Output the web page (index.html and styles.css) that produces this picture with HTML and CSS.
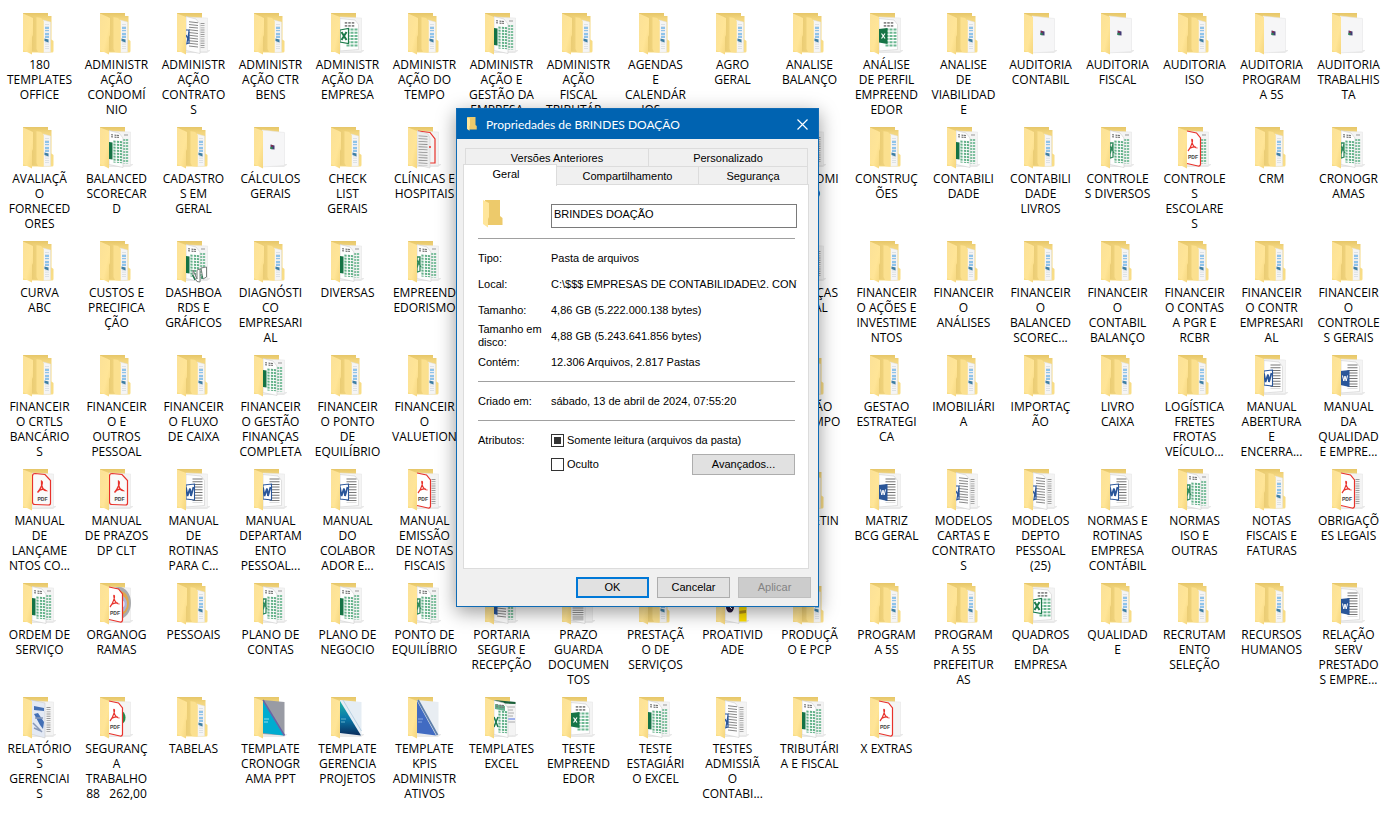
FILE: index.html
```html
<!DOCTYPE html>
<html lang="pt-BR">
<head>
<meta charset="utf-8">
<title>Propriedades de BRINDES DOAÇÃO</title>
<link rel="stylesheet" href="styles.css">
</head>
<body>
<svg class="defs" aria-hidden="true">
<defs>
<linearGradient id="gBack" x1="0" y1="0" x2="0" y2="1"><stop offset="0" stop-color="#e6c668"/><stop offset=".15" stop-color="#f3d67f"/><stop offset="1" stop-color="#f9de88"/></linearGradient>
<linearGradient id="gCover" x1="0" y1="0" x2="1" y2="1"><stop offset="0" stop-color="#fbe197"/><stop offset=".6" stop-color="#ffe597"/><stop offset="1" stop-color="#f5d67d"/></linearGradient>
<linearGradient id="gMid" x1="0" y1="0" x2="1" y2="0"><stop offset="0" stop-color="#e9cb73"/><stop offset=".5" stop-color="#f0d37c"/><stop offset="1" stop-color="#fce08d"/></linearGradient>
<linearGradient id="gTeal" x1="0" y1="0" x2="0" y2="1"><stop offset="0" stop-color="#22b1a5"/><stop offset=".5" stop-color="#0879aa"/><stop offset="1" stop-color="#0b2c5c"/></linearGradient>
<g id="back"><path d="M0 0H25V39H0Z" fill="url(#gBack)"/><path d="M9 37H34L30 40H9Z" fill="#e9e9e9"/></g>
<path id="cover" d="M0 0.5L9 4V41.5L0 37Z" fill="url(#gCover)"/>
<path id="far" d="M9 4L30.5 5V38.5L9 39Z" fill="#f4f4f4" stroke="#e2e2e2" stroke-width=".5"/>
<path id="near" d="M9 3.5L19 6L23 11V40.5L9 37.5Z" fill="#fdfdfd" stroke="#cfcfcf" stroke-width=".6"/>
<path id="wide" d="M9 5.5L24 7L27.500 11.500V36.500L9 38Z" fill="#fefefe" stroke="#cfcfcf" stroke-width=".6"/>
<g id="farXl"><use href="#far"/><path d="M24 12V36.500M27 12V36.500" stroke="#7fc09f" stroke-width="2.300" stroke-dasharray="2 1"/><path d="M24 8H28" stroke="#999" stroke-width="1"/></g>
<g id="farDoc"><use href="#far"/><path d="M25.500 10V36" stroke="#999" stroke-width="4" stroke-dasharray=".9 1.300"/></g>
<g id="nearCells" fill="none" transform="skewY(6)"><path d="M12 6V10M15.500 6V10M18 6V9" stroke="#777" stroke-width="2" stroke-dasharray="1.200 .8"/><path d="M14.500 12V34M18 12V34M21 12V34" stroke="#62b088" stroke-width="2.200" stroke-dasharray="2 1"/></g>
<g id="wideLines" fill="none"><path d="M20.500 9.500V34" stroke="#777" stroke-width="10" stroke-dasharray="1 1.700"/></g>
<g id="wideCells" fill="none"><path d="M15 9V14M18.500 9V14M22 9V14" stroke="#888" stroke-width="2.500" stroke-dasharray="1.800 1.200"/><path d="M17 15.500V34M21 15.500V34M25 15.500V34" stroke="#6cb892" stroke-width="3" stroke-dasharray="2 1.200"/></g>
<g id="acro" fill="none"><path d="M9 4L18.500 6L22.500 11V37.500Q22 39.500 20 39L9 36.500" fill="#fff" stroke="#e8322b" stroke-width="1.200"/><path d="M13.500 12.500C16 11 13.500 20 10 24M13.700 12.500C14 17 16 21 19.500 21M11.500 21.500C13.500 20 16 19.500 18 20" stroke="#e8322b" stroke-width="1.200"/><text class="glyph glyph-small" x="10" y="31.500" fill="#444">PDF</text></g>
</defs>
<symbol id="f" viewBox="0 0 33 44">
<path d="M0 0H25V3H28.500V26.500L30.500 28V38Q30.500 39.500 29 39.500H8V39H0Z" fill="url(#gBack)"/>
<path d="M20 7L27.500 9V39L20 39.500Z" fill="#f5f5f5" stroke="#e0e0e0" stroke-width=".5"/>
<path d="M24 11V37" stroke="#d3dae0" stroke-width="4" stroke-dasharray=".8 1.400"/>
<path d="M24 14V18M24 20V25" stroke="#8fc3ea" stroke-width="4" stroke-dasharray="2 1"/>
<path d="M21.500 25.500L25.500 26.500V29.500L21.500 28Z" fill="#3f7fa4"/>
<path d="M8 3L18 5L20.500 8V39.500L8 38.500Z" fill="url(#gMid)"/>
<path d="M13.500 4.200L18 5L20.500 8V39.500L15 39L13.500 36Z" fill="#fbe08f"/>
<path d="M0 .5L10 5V22L9 24V41.500L0 37Z" fill="url(#gCover)"/>
</symbol>
<symbol id="b" viewBox="0 0 33 44"><use href="#back"/><path d="M8 3L30.500 5.500V38.500L8 40Z" fill="#f6f6f7" stroke="#e2e2e2" stroke-width=".5"/><path d="M16.500 17.500L20.500 18.500V22.500L16.500 22Z" fill="#433a75"/><path d="M16.500 20H18.500V22.200L16.500 22Z" fill="#2c8a52"/><path d="M17 17.700L19 18.200V19.500H17Z" fill="#8a3048"/><use href="#cover"/></symbol>
<symbol id="xx" viewBox="0 0 33 44"><use href="#back"/><use href="#farXl"/><use href="#near"/><use href="#nearCells"/><path d="M9 15L12.500 15.500V32.500L9 32Z" fill="#147345"/><use href="#cover"/></symbol>
<symbol id="xo" viewBox="0 0 33 44"><use href="#back"/><use href="#farXl"/><use href="#near"/><use href="#nearCells"/><path d="M9 16H12V30L9 31ZM9 19L13 26M12 17L9 27" fill="none" stroke="#2f8a5c" stroke-width="1.300"/><use href="#cover"/></symbol>
<symbol id="xd" viewBox="0 0 33 44"><use href="#back"/><use href="#farXl"/><use href="#near"/><use href="#nearCells"/><path d="M9 15L12.500 15.500V32.500L9 32Z" fill="#147345"/><path d="M16 29L20 38V29L23 28V41L20 40.500L16 34ZM24 27L29.500 26V36L26 38Z" fill="#fff" stroke="#69736e" stroke-width=".9"/><path d="M15.500 34L18 39M25 35V38" stroke="#19774a" stroke-width="1.300"/><use href="#cover"/></symbol>
<symbol id="x1" viewBox="0 0 33 44"><use href="#back"/><use href="#far"/><use href="#wide"/><use href="#wideCells"/><path d="M9 17L17.500 15.500V30.500L9 29Z" fill="#fff" stroke="#1b7a4a" stroke-width="1.200"/><path d="M10.500 19L15.500 27M15.500 19L10.500 27" stroke="#1b7a4a" stroke-width="2"/><use href="#cover"/></symbol>
<symbol id="x2" viewBox="0 0 33 44"><use href="#back"/><use href="#far"/><use href="#wide"/><use href="#wideCells"/><path d="M9 16L17.500 15V31L9 29.500Z" fill="#167446"/><path d="M11.500 20.500L15 25.500M15 20.500L11.500 25.500" stroke="#fff" stroke-width="1.200"/><use href="#cover"/></symbol>
<symbol id="w1" viewBox="0 0 33 44"><use href="#back"/><use href="#far"/><use href="#wide"/><use href="#wideLines"/><path d="M9 16L17.500 15V31L9 30Z" fill="#fff" stroke="#2a5699" stroke-width="1.100"/><path d="M9 18.500L10.500 27L13 19.500L14 27L16.500 18" fill="none" stroke="#2a5699" stroke-width="1.800"/><use href="#cover"/></symbol>
<symbol id="w2" viewBox="0 0 33 44"><use href="#back"/><use href="#far"/><use href="#wide"/><use href="#wideLines"/><path d="M8.500 16L17.500 15V32L8.500 30Z" fill="#2a5699"/><path d="M10.500 20.500L11.800 26L13 21L14.200 26L15.500 20.500" fill="none" stroke="#fff" stroke-width="1"/><use href="#cover"/></symbol>
<symbol id="ww" viewBox="0 0 33 44"><use href="#back"/><use href="#farDoc"/><use href="#near"/><path d="M16.500 7V34" stroke="#888" stroke-width="9" stroke-dasharray="1 1.700" transform="skewY(6)"/><path d="M9 17H12V30L9 31M9 22L12 28M12 18L10 30" fill="none" stroke="#2a5699" stroke-width="1.200"/><use href="#cover"/></symbol>
<symbol id="wx" viewBox="0 0 33 44"><use href="#back"/><use href="#farXl"/><use href="#near"/><path d="M16.500 7V34" stroke="#888" stroke-width="9" stroke-dasharray="1 1.700" transform="skewY(6)"/><path d="M9 17L12.500 18V32L9 31Z" fill="#2a5699"/><use href="#cover"/></symbol>
<symbol id="pdf" viewBox="0 0 33 44"><use href="#back"/><use href="#far"/><path d="M12 4.500L22 5.500L27.500 11.500V34Q27.500 36 25.500 36L12 35.500Q9.500 35.500 9.500 33V7Q9.500 4.500 12 4.500Z" fill="#fafafa" stroke="#e8322b" stroke-width="1.200"/><path d="M18.500 12C21 13 17.500 20 14.500 23.500C17 20 20 19.500 23 21.500C20 21.500 18 17 18.500 12Z" fill="none" stroke="#e8322b" stroke-width="1.300"/><text class="glyph glyph-small" x="14.500" y="31.500" fill="#444">PDF</text><use href="#cover"/></symbol>
<symbol id="pn" viewBox="0 0 33 44"><use href="#back"/><use href="#far"/><use href="#acro"/><use href="#cover"/></symbol>
<symbol id="pw" viewBox="0 0 33 44"><use href="#back"/><use href="#farDoc"/><use href="#acro"/><use href="#cover"/></symbol>
<symbol id="px" viewBox="0 0 33 44"><use href="#back"/><use href="#farXl"/><use href="#acro"/><use href="#cover"/></symbol>
<symbol id="pg" viewBox="0 0 33 44"><use href="#back"/><use href="#far"/><path d="M22 14Q25.500 16 25.500 20.500T22 27Z" fill="#25884b"/><use href="#acro"/><use href="#cover"/></symbol>
<symbol id="pd" viewBox="0 0 33 44"><use href="#back"/><use href="#far"/><ellipse cx="19" cy="20" rx="12" ry="16" fill="#a9abad"/><ellipse cx="20" cy="20" rx="9" ry="12" fill="#dfa84e"/><ellipse cx="20" cy="21" rx="7" ry="9" fill="#aeb2d5"/><ellipse cx="23" cy="21" rx="1.500" ry="3" fill="#eef"/><use href="#acro"/><use href="#cover"/></symbol>
<symbol id="cl" viewBox="0 0 33 44"><use href="#back"/><use href="#far"/><path d="M10 4L22 5.500L27 12V36H22" fill="none" stroke="#e8322b" stroke-width="1.200"/><path d="M9 4L20 7L22 11V41L9 38Z" fill="#ededed" stroke="#ccc" stroke-width=".5"/><path d="M15 8V38" stroke="#8b8b8b" stroke-width="9" stroke-dasharray=".8 1.900" transform="skewY(3)"/><circle cx="22" cy="20" r="1" fill="#e8322b"/><use href="#cover"/></symbol>
<symbol id="gd" viewBox="0 0 33 44"><use href="#back"/><use href="#far"/><use href="#near"/><path d="M16 7V38" stroke="#8d8d8d" stroke-width="11" stroke-dasharray="1 1.200"/><path d="M10 23H22" stroke="#d94949" stroke-width="1.500"/><use href="#cover"/></symbol>
<symbol id="pr" viewBox="0 0 33 44"><use href="#back"/><use href="#far"/><path d="M21 8H30.500V38.500H21Z" fill="#ffe000"/><path d="M22 28L30 27V30L22 31Z" fill="#b59112"/><use href="#near"/><ellipse cx="14" cy="24" rx="4" ry="5.500" fill="#271a3d"/><path d="M13 23L16 26" stroke="#fff" stroke-width="1"/><use href="#cover"/></symbol>
<symbol id="rg" viewBox="0 0 33 44"><use href="#back"/><use href="#farDoc"/><path d="M8 3L22 6V41L8 37Z" fill="#e3e9f4" stroke="#c4c4c4" stroke-width=".5"/><path d="M11 9L21 11V14L11 13ZM11 17L15 16L21 25L20 32L17 28Z" fill="#4470b5"/><path d="M10 26L19 35M12 21H20M11 31L18 34" stroke="#8798b9" stroke-width="1.500"/><use href="#cover"/></symbol>
<symbol id="t1" viewBox="0 0 33 44"><use href="#back"/><path d="M9 3L30.500 5V38.500L9 37Z" fill="#999ba4"/><path d="M9 4L30 38.500L9 36Z" fill="#00acd0"/><path d="M9 3L30.500 38.500" stroke="#6964a5" stroke-width="1.500"/><path d="M10 22H15M10 25H14" stroke="#b4e8f2" stroke-width=".8"/><use href="#cover"/></symbol>
<symbol id="t2" viewBox="0 0 33 44"><use href="#back"/><path d="M9 3L30.500 5V38.500L9 37Z" fill="#e5edf4"/><path d="M9 4L30 38.500L9 36Z" fill="url(#gTeal)"/><path d="M12 3L30.500 34" stroke="#b9d1e3" stroke-width="1"/><path d="M10 22H15M10 25H14" stroke="#7cc3d8" stroke-width=".8"/><use href="#cover"/></symbol>
<symbol id="t3" viewBox="0 0 33 44"><use href="#back"/><path d="M9 3L30.500 5V38.500L9 37Z" fill="#e8edf2"/><path d="M9 4L28 38.500L9 36Z" fill="#416bc2"/><path d="M10 3L29.500 38" stroke="#5e7faa" stroke-width="1.800"/><path d="M10 22H15M10 25H14" stroke="#9db7ea" stroke-width=".8"/><use href="#cover"/></symbol>
<symbol id="te" viewBox="0 0 33 44"><use href="#back"/><use href="#far"/><path d="M9 3L30.500 5V7L9 6Z" fill="#1a5f38"/><path d="M22 10H30M22 13H28M22 16H29M22 19H28M22 25H30" stroke="#999" stroke-width=".8"/><path d="M22 22H30" stroke="#4c6ee6" stroke-width="1"/><use href="#near"/><path d="M10 7L20 9V14L10 12Z" fill="#63b08b"/><use href="#nearCells"/><path d="M9 20L13 30M13 20L9 30" stroke="#19774a" stroke-width="1.500"/><use href="#cover"/></symbol>
<symbol id="closed" viewBox="0 0 20 28"><path d="M2 0H17V16L19.500 18V25H2Z" fill="#edca6b"/><path d="M0 0L6 3V17L5 19V27.500L0 24Z" fill="#ffe69b"/></symbol>
</svg>

<ul class="desktop">
<li class="item"><svg class="pic"><use href="#f"/></svg><span>180<br>TEMPLATES<br>OFFICE</span></li>
<li class="item"><svg class="pic"><use href="#f"/></svg><span>ADMINISTR<br>AÇÃO<br>CONDOMÍ<br>NIO</span></li>
<li class="item"><svg class="pic"><use href="#ww"/></svg><span>ADMINISTR<br>AÇÃO<br>CONTRATO<br>S</span></li>
<li class="item"><svg class="pic"><use href="#f"/></svg><span>ADMINISTR<br>AÇÃO CTR<br>BENS</span></li>
<li class="item"><svg class="pic"><use href="#x1"/></svg><span>ADMINISTR<br>AÇÃO DA<br>EMPRESA</span></li>
<li class="item"><svg class="pic"><use href="#f"/></svg><span>ADMINISTR<br>AÇÃO DO<br>TEMPO</span></li>
<li class="item"><svg class="pic"><use href="#xx"/></svg><span>ADMINISTR<br>AÇÃO E<br>GESTÃO DA<br>EMPRESA...</span></li>
<li class="item"><svg class="pic"><use href="#f"/></svg><span>ADMINISTR<br>AÇÃO<br>FISCAL<br>TRIBUTÁR...</span></li>
<li class="item"><svg class="pic"><use href="#f"/></svg><span>AGENDAS<br>E<br>CALENDÁR<br>IOS...</span></li>
<li class="item"><svg class="pic"><use href="#f"/></svg><span>AGRO<br>GERAL</span></li>
<li class="item"><svg class="pic"><use href="#f"/></svg><span>ANALISE<br>BALANÇO</span></li>
<li class="item"><svg class="pic"><use href="#x2"/></svg><span>ANÁLISE<br>DE PERFIL<br>EMPREEND<br>EDOR</span></li>
<li class="item"><svg class="pic"><use href="#f"/></svg><span>ANALISE<br>DE<br>VIABILIDAD<br>E</span></li>
<li class="item"><svg class="pic"><use href="#b"/></svg><span>AUDITORIA<br>CONTABIL</span></li>
<li class="item"><svg class="pic"><use href="#b"/></svg><span>AUDITORIA<br>FISCAL</span></li>
<li class="item"><svg class="pic"><use href="#f"/></svg><span>AUDITORIA<br>ISO</span></li>
<li class="item"><svg class="pic"><use href="#b"/></svg><span>AUDITORIA<br>PROGRAM<br>A 5S</span></li>
<li class="item"><svg class="pic"><use href="#b"/></svg><span>AUDITORIA<br>TRABALHIS<br>TA</span></li>

<li class="item"><svg class="pic"><use href="#f"/></svg><span>AVALIAÇÃ<br>O<br>FORNECED<br>ORES</span></li>
<li class="item"><svg class="pic"><use href="#xx"/></svg><span>BALANCED<br>SCORECAR<br>D</span></li>
<li class="item"><svg class="pic"><use href="#f"/></svg><span>CADASTRO<br>S EM<br>GERAL</span></li>
<li class="item"><svg class="pic"><use href="#b"/></svg><span>CÁLCULOS<br>GERAIS</span></li>
<li class="item"><svg class="pic"><use href="#f"/></svg><span>CHECK<br>LIST<br>GERAIS</span></li>
<li class="item"><svg class="pic"><use href="#cl"/></svg><span>CLÍNICAS E<br>HOSPITAIS</span></li>
<li class="gap"></li>
<li class="item"><svg class="pic"><use href="#ww"/></svg><span>CONDOMI<br>NIO</span></li>
<li class="item"><svg class="pic"><use href="#f"/></svg><span>CONSTRUÇ<br>ÕES</span></li>
<li class="item"><svg class="pic"><use href="#xx"/></svg><span>CONTABILI<br>DADE</span></li>
<li class="item"><svg class="pic"><use href="#f"/></svg><span>CONTABILI<br>DADE<br>LIVROS</span></li>
<li class="item"><svg class="pic"><use href="#xo"/></svg><span>CONTROLE<br>S DIVERSOS</span></li>
<li class="item"><svg class="pic"><use href="#px"/></svg><span>CONTROLE<br>S<br>ESCOLARE<br>S</span></li>
<li class="item"><svg class="pic"><use href="#f"/></svg><span>CRM</span></li>
<li class="item"><svg class="pic"><use href="#xo"/></svg><span>CRONOGR<br>AMAS</span></li>

<li class="item"><svg class="pic"><use href="#f"/></svg><span>CURVA<br>ABC</span></li>
<li class="item"><svg class="pic"><use href="#f"/></svg><span>CUSTOS E<br>PRECIFICA<br>ÇÃO</span></li>
<li class="item"><svg class="pic"><use href="#xd"/></svg><span>DASHBOA<br>RDS E<br>GRÁFICOS</span></li>
<li class="item"><svg class="pic"><use href="#f"/></svg><span>DIAGNÓSTI<br>CO<br>EMPRESARI<br>AL</span></li>
<li class="item"><svg class="pic"><use href="#xx"/></svg><span>DIVERSAS</span></li>
<li class="item"><svg class="pic"><use href="#xo"/></svg><span>EMPREEND<br>EDORISMO</span></li>
<li class="gap"></li>
<li class="item"><svg class="pic"><use href="#ww"/></svg><span>FINANÇAS<br>GERAL</span></li>
<li class="item"><svg class="pic"><use href="#f"/></svg><span>FINANCEIR<br>O AÇÕES E<br>INVESTIME<br>NTOS</span></li>
<li class="item"><svg class="pic"><use href="#f"/></svg><span>FINANCEIR<br>O<br>ANÁLISES</span></li>
<li class="item"><svg class="pic"><use href="#f"/></svg><span>FINANCEIR<br>O<br>BALANCED<br>SCOREC...</span></li>
<li class="item"><svg class="pic"><use href="#f"/></svg><span>FINANCEIR<br>O<br>CONTABIL<br>BALANÇO</span></li>
<li class="item"><svg class="pic"><use href="#f"/></svg><span>FINANCEIR<br>O CONTAS<br>A PGR E<br>RCBR</span></li>
<li class="item"><svg class="pic"><use href="#f"/></svg><span>FINANCEIR<br>O CONTR<br>EMPRESARI<br>AL</span></li>
<li class="item"><svg class="pic"><use href="#f"/></svg><span>FINANCEIR<br>O<br>CONTROLE<br>S GERAIS</span></li>

<li class="item"><svg class="pic"><use href="#f"/></svg><span>FINANCEIR<br>O CRTLS<br>BANCÁRIO<br>S</span></li>
<li class="item"><svg class="pic"><use href="#f"/></svg><span>FINANCEIR<br>O E<br>OUTROS<br>PESSOAL</span></li>
<li class="item"><svg class="pic"><use href="#f"/></svg><span>FINANCEIR<br>O FLUXO<br>DE CAIXA</span></li>
<li class="item"><svg class="pic"><use href="#xx"/></svg><span>FINANCEIR<br>O GESTÃO<br>FINANÇAS<br>COMPLETA</span></li>
<li class="item"><svg class="pic"><use href="#f"/></svg><span>FINANCEIR<br>O PONTO<br>DE<br>EQUILÍBRIO</span></li>
<li class="item"><svg class="pic"><use href="#f"/></svg><span>FINANCEIR<br>O<br>VALUETION</span></li>
<li class="gap"></li>
<li class="item"><svg class="pic"><use href="#f"/></svg><span>GESTÃO<br>DO TEMPO</span></li>
<li class="item"><svg class="pic"><use href="#f"/></svg><span>GESTAO<br>ESTRATEGI<br>CA</span></li>
<li class="item"><svg class="pic"><use href="#f"/></svg><span>IMOBILIÁRI<br>A</span></li>
<li class="item"><svg class="pic"><use href="#f"/></svg><span>IMPORTAÇ<br>ÃO</span></li>
<li class="item"><svg class="pic"><use href="#f"/></svg><span>LIVRO<br>CAIXA</span></li>
<li class="item"><svg class="pic"><use href="#f"/></svg><span>LOGÍSTICA<br>FRETES<br>FROTAS<br>VEÍCULO...</span></li>
<li class="item"><svg class="pic"><use href="#w1"/></svg><span>MANUAL<br>ABERTURA<br>E<br>ENCERRA...</span></li>
<li class="item"><svg class="pic"><use href="#w2"/></svg><span>MANUAL<br>DA<br>QUALIDAD<br>E EMPRE...</span></li>

<li class="item"><svg class="pic"><use href="#pdf"/></svg><span>MANUAL<br>DE<br>LANÇAME<br>NTOS CO...</span></li>
<li class="item"><svg class="pic"><use href="#pdf"/></svg><span>MANUAL<br>DE PRAZOS<br>DP CLT</span></li>
<li class="item"><svg class="pic"><use href="#w1"/></svg><span>MANUAL<br>DE<br>ROTINAS<br>PARA C...</span></li>
<li class="item"><svg class="pic"><use href="#w1"/></svg><span>MANUAL<br>DEPARTAM<br>ENTO<br>PESSOAL...</span></li>
<li class="item"><svg class="pic"><use href="#w1"/></svg><span>MANUAL<br>DO<br>COLABOR<br>ADOR E...</span></li>
<li class="item"><svg class="pic"><use href="#pw"/></svg><span>MANUAL<br>EMISSÃO<br>DE NOTAS<br>FISCAIS</span></li>
<li class="gap"></li>
<li class="item"><svg class="pic"><use href="#f"/></svg><span>MARKETIN<br>G</span></li>
<li class="item"><svg class="pic"><use href="#w2"/></svg><span>MATRIZ<br>BCG GERAL</span></li>
<li class="item"><svg class="pic"><use href="#ww"/></svg><span>MODELOS<br>CARTAS E<br>CONTRATO<br>S</span></li>
<li class="item"><svg class="pic"><use href="#ww"/></svg><span>MODELOS<br>DEPTO<br>PESSOAL<br>(25)</span></li>
<li class="item"><svg class="pic"><use href="#w1"/></svg><span>NORMAS E<br>ROTINAS<br>EMPRESA<br>CONTÁBIL</span></li>
<li class="item"><svg class="pic"><use href="#xo"/></svg><span>NORMAS<br>ISO E<br>OUTRAS</span></li>
<li class="item"><svg class="pic"><use href="#f"/></svg><span>NOTAS<br>FISCAIS E<br>FATURAS</span></li>
<li class="item"><svg class="pic"><use href="#pw"/></svg><span>OBRIGAÇÕ<br>ES LEGAIS</span></li>

<li class="item"><svg class="pic"><use href="#xx"/></svg><span>ORDEM DE<br>SERVIÇO</span></li>
<li class="item"><svg class="pic"><use href="#pd"/></svg><span>ORGANOG<br>RAMAS</span></li>
<li class="item"><svg class="pic"><use href="#f"/></svg><span>PESSOAIS</span></li>
<li class="item"><svg class="pic"><use href="#xo"/></svg><span>PLANO DE<br>CONTAS</span></li>
<li class="item"><svg class="pic"><use href="#xx"/></svg><span>PLANO DE<br>NEGOCIO</span></li>
<li class="item"><svg class="pic"><use href="#xo"/></svg><span>PONTO DE<br>EQUILÍBRIO</span></li>
<li class="item"><svg class="pic"><use href="#wx"/></svg><span>PORTARIA<br>SEGUR E<br>RECEPÇÃO</span></li>
<li class="item"><svg class="pic"><use href="#gd"/></svg><span>PRAZO<br>GUARDA<br>DOCUMEN<br>TOS</span></li>
<li class="item"><svg class="pic"><use href="#f"/></svg><span>PRESTAÇÃ<br>O DE<br>SERVIÇOS</span></li>
<li class="item"><svg class="pic"><use href="#pr"/></svg><span>PROATIVID<br>ADE</span></li>
<li class="item"><svg class="pic"><use href="#f"/></svg><span>PRODUÇÃ<br>O E PCP</span></li>
<li class="item"><svg class="pic"><use href="#f"/></svg><span>PROGRAM<br>A 5S</span></li>
<li class="item"><svg class="pic"><use href="#f"/></svg><span>PROGRAM<br>A 5S<br>PREFEITUR<br>AS</span></li>
<li class="item"><svg class="pic"><use href="#x1"/></svg><span>QUADROS<br>DA<br>EMPRESA</span></li>
<li class="item"><svg class="pic"><use href="#f"/></svg><span>QUALIDAD<br>E</span></li>
<li class="item"><svg class="pic"><use href="#f"/></svg><span>RECRUTAM<br>ENTO<br>SELEÇÃO</span></li>
<li class="item"><svg class="pic"><use href="#f"/></svg><span>RECURSOS<br>HUMANOS</span></li>
<li class="item"><svg class="pic"><use href="#w2"/></svg><span>RELAÇÃO<br>SERV<br>PRESTADO<br>S EMPRE...</span></li>

<li class="item"><svg class="pic"><use href="#rg"/></svg><span>RELATÓRIO<br>S<br>GERENCIAI<br>S</span></li>
<li class="item"><svg class="pic"><use href="#pg"/></svg><span>SEGURANÇ<br>A<br>TRABALHO<br>88&nbsp;&nbsp; 262,00</span></li>
<li class="item"><svg class="pic"><use href="#f"/></svg><span>TABELAS</span></li>
<li class="item"><svg class="pic"><use href="#t1"/></svg><span>TEMPLATE<br>CRONOGR<br>AMA PPT</span></li>
<li class="item"><svg class="pic"><use href="#t2"/></svg><span>TEMPLATE<br>GERENCIA<br>PROJETOS</span></li>
<li class="item"><svg class="pic"><use href="#t3"/></svg><span>TEMPLATE<br>KPIS<br>ADMINISTR<br>ATIVOS</span></li>
<li class="item"><svg class="pic"><use href="#te"/></svg><span>TEMPLATES<br>EXCEL</span></li>
<li class="item"><svg class="pic"><use href="#x2"/></svg><span>TESTE<br>EMPREEND<br>EDOR</span></li>
<li class="item"><svg class="pic"><use href="#xx"/></svg><span>TESTE<br>ESTAGIÁRI<br>O EXCEL</span></li>
<li class="item"><svg class="pic"><use href="#ww"/></svg><span>TESTES<br>ADMISSIÃ<br>O<br>CONTABI...</span></li>
<li class="item"><svg class="pic"><use href="#xx"/></svg><span>TRIBUTÁRI<br>A E FISCAL</span></li>
<li class="item"><svg class="pic"><use href="#pn"/></svg><span>X EXTRAS</span></li>
</ul>

<form class="dialog" role="dialog" aria-labelledby="dialog-title">
<header class="titlebar">
<svg class="title-icon"><use href="#closed"/></svg>
<h1 class="title" id="dialog-title">Propriedades de BRINDES DOAÇÃO</h1>
<button class="close" type="button" aria-label="Fechar"><svg viewBox="0 0 11 11" width="11" height="11"><path d="M.5 .5L10.500 10.500M10.500 .5L.5 10.500" stroke="#fff" stroke-width="1.200"/></svg></button>
</header>
<div class="tabs" role="tablist">
<div class="tab-row">
<button class="tab tab-half" type="button" role="tab">Versões Anteriores</button>
<button class="tab" type="button" role="tab">Personalizado</button>
</div>
<div class="tab-row tab-row-front">
<button class="tab tab-active" type="button" role="tab" aria-selected="true">Geral</button>
<button class="tab tab-mid" type="button" role="tab">Compartilhamento</button>
<button class="tab" type="button" role="tab">Segurança</button>
</div>
</div>
<section class="panel" role="tabpanel">
<div class="name-row"><svg class="folder-icon"><use href="#closed"/></svg><input class="name" type="text" value="BRINDES DOAÇÃO" aria-label="Nome da pasta"></div>
<hr>
<dl class="facts">
<dt>Tipo:</dt><dd>Pasta de arquivos</dd>
<dt>Local:</dt><dd>C:\$$$ EMPRESAS DE CONTABILIDADE\2. CONTABIL</dd>
<dt>Tamanho:</dt><dd>4,86 GB (5.222.000.138 bytes)</dd>
<dt>Tamanho em disco:</dt><dd>4,88 GB (5.243.641.856 bytes)</dd>
<dt>Contém:</dt><dd>12.306 Arquivos, 2.817 Pastas</dd>
</dl>
<hr>
<dl class="facts"><dt>Criado em:</dt><dd>sábado, 13 de abril de 2024, 07:55:20</dd></dl>
<hr>
<div class="attributes">
<span>Atributos:</span>
<label class="check"><input class="partial" type="checkbox" checked>Somente leitura (arquivos da pasta)</label>
<label class="check check-hidden"><input type="checkbox">Oculto</label>
<button class="button button-wide" type="button">Avançados...</button>
</div>
</section>
<footer class="actions">
<button class="button button-default" type="submit">OK</button>
<button class="button" type="button">Cancelar</button>
<button class="button" type="button" disabled>Aplicar</button>
</footer>
</form>
</body>
</html>
```
FILE: styles.css
```css
* { box-sizing: border-box; }
body { margin: 0; min-height: 100vh; background: #fff; color: #000; font: 12px/15px "Segoe UI", "Open Sans", sans-serif; overflow: hidden; }
.defs { position: absolute; width: 0; height: 0; }
.glyph { font: bold 7px "Liberation Sans", sans-serif; }
.glyph-small { font-size: 5px; }

.desktop { display: grid; grid-template-columns: repeat(auto-fill, 77px); grid-auto-rows: 114px; margin: 0; padding: 0 0 0 1px; list-style: none; }
.item { display: flex; flex-direction: column; align-items: center; padding-top: 13px; text-align: center; white-space: nowrap; }
.pic { width: 33px; height: 44px; flex: none; }
.gap { grid-column: span 4; }

.dialog { position: absolute; left: 456px; top: 108px; width: 363px; min-height: 499px; display: flex; flex-direction: column; background: #f0f0f0; border: 1px solid #0f6bb5; box-shadow: 0 5px 18px rgba(0, 0, 0, .4); font: 11px/13px "Microsoft Sans Serif", "Liberation Sans", sans-serif; }
.dialog button, .dialog input { font: inherit; color: inherit; }
.titlebar { display: flex; align-items: center; height: 30px; padding: 0 10px; background: #0063b1; color: #fff; }
.title-icon { width: 10px; height: 14px; }
.title { flex: 1; margin: 0 0 0 9px; font: 12px/15px "Segoe UI", Lato, sans-serif; }
.dialog .close { display: flex; padding: 0; border: 0; background: none; }

.tabs { margin: 9px 10px 0 8px; }
.tab-row { display: flex; height: 18px; border-left: 1px solid #dcdcdc; }
.tab-row-front { border: 0; }
.tab { flex: 1; padding: 1px 0 0; border: 1px solid #dcdcdc; border-width: 1px 1px 0 0; background: #f0f0f0; }
.tab-half { flex: 0 0 183px; }
.tab-mid { flex: 0 0 142px; }
.dialog .tab-active { position: relative; flex: 0 0 94px; height: 22px; margin: -2px 0 0 -2px; padding: 0 8px 3px 0; border-left-width: 1px; background: #fff; }

.panel { flex: 1; margin: 0 9px 0 6px; padding: 15px 11px 0 14px; border: 1px solid #dcdcdc; background: #fff; }
.name-row { display: grid; grid-template-columns: 73px 1fr; align-items: end; height: 28px; margin-bottom: 10px; }
.folder-icon { width: 20px; height: 28px; margin-left: 5px; }
.name { width: 100%; height: 24px; padding: 0 2px 4px; border: 1px solid #7a7a7a; background: #fff; }
hr { height: 1px; margin: 6px 2px 6px 0; border: 0; background: #a0a0a0; }
.facts { display: grid; grid-template-columns: 73px 1fr; grid-auto-rows: 26px; align-items: center; margin: 0; }
.facts dd { margin: 0; overflow: hidden; white-space: nowrap; }
.attributes { display: grid; grid-template-columns: 73px 1fr 103px; align-items: center; grid-template-rows: 26px 22px; padding-right: 2px; }
.check { grid-column: 2 / 4; display: flex; align-items: center; gap: 3px; }
.check-hidden { grid-column: 2; }
.check input { appearance: none; width: 13px; height: 13px; margin: 0; border: 1px solid #333; background: #fff; }
.check .partial { padding: 2px; background: #333 content-box; }

.actions { display: flex; justify-content: flex-end; gap: 8px; padding: 8px 7px; }
.button { width: 73px; height: 21px; padding: 0; border: 1px solid #adadad; background: #e1e1e1; }
.button-wide { width: 103px; }
.button-default { border: 2px solid #0078d7; }
.dialog .button:disabled { border-color: #bfbfbf; background: #ccc; color: #838383; }
```
